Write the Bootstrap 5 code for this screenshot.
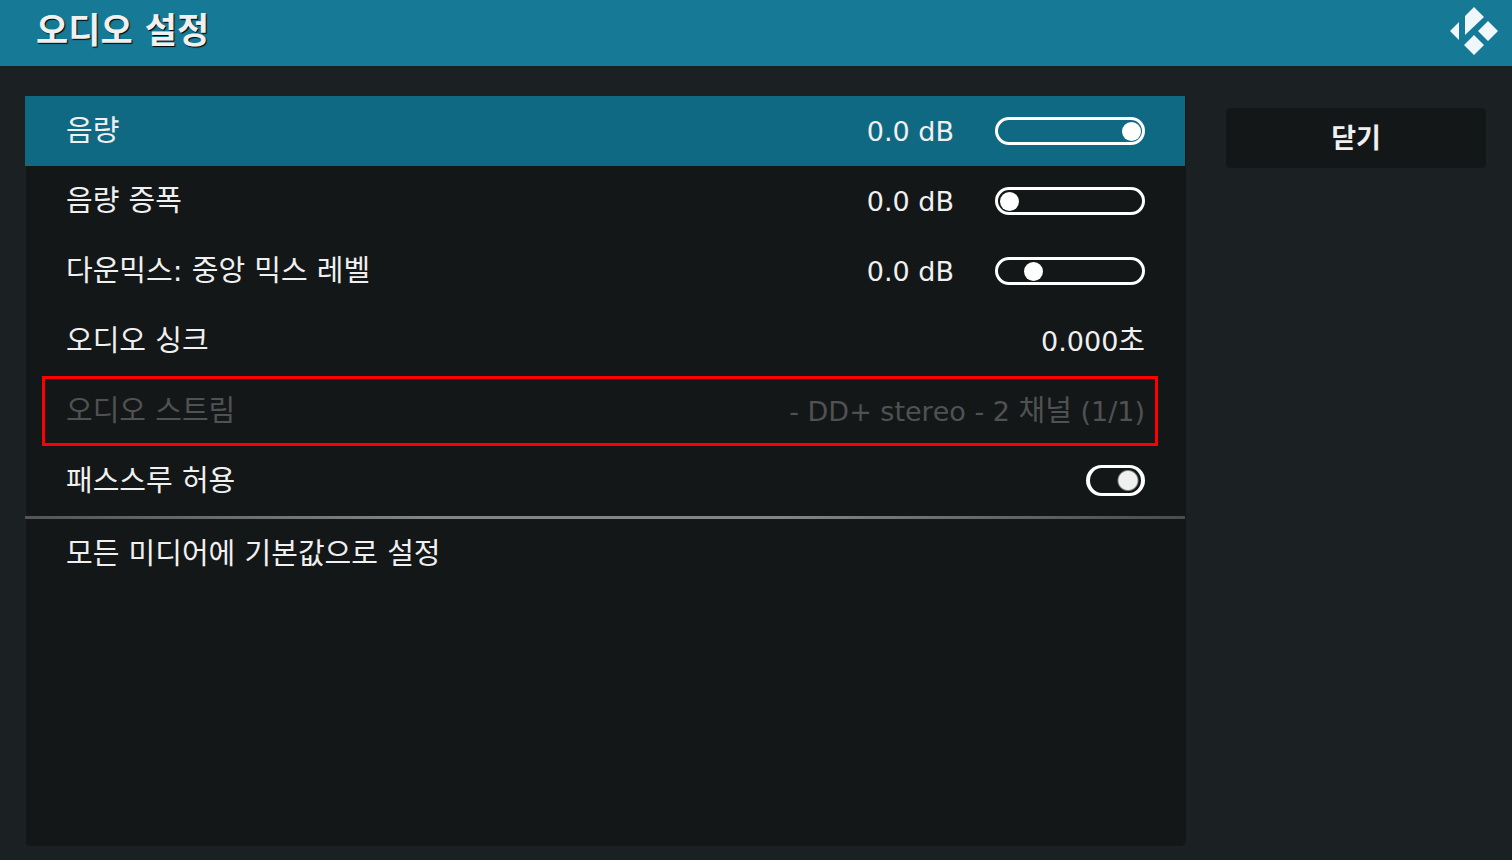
<!DOCTYPE html>
<html lang="ko">
<head>
<meta charset="utf-8">
<meta name="viewport" content="width=device-width, initial-scale=1">
<title>오디오 설정</title>
<link href="https://cdn.jsdelivr.net/npm/bootstrap@5.3.0/dist/css/bootstrap.min.css" rel="stylesheet">
<style>
  body {
    background: #1b2123;
    color: #f0f0f0;
    font-family: "DejaVu Sans", "Noto Sans CJK KR", sans-serif;
    font-size: 29px;
    line-height: 40px;
    font-kerning: none;
  }
  .topbar { background: #167a97; height: 66px; padding: 0 14px 4px 36px; }
  .topbar h1 { font-size: 35px; line-height: 48px; font-weight: 700; text-shadow: 1px 1px 1px #000; }
  .kodi-logo { width: 48px; height: 48px; }
  .dialog { padding: 30px 26px 14px 25px; gap: 40px; }
  .panel {
    background: linear-gradient(#141718, #141718) right / calc(100% - 1px) 100% no-repeat;
    border-radius: 0 0 5px 5px; padding-right: 1px; min-width: 0;
  }
  .setting { height: 70px; padding: 0 40px 0 41px; }
  .setting.selected { background: #106983; }
  .setting.is-disabled { color: #505152; position: relative; }
  .setting.is-disabled::after {
    content: ""; position: absolute; inset: 0 27px 0 17px; border: 3px solid #f00; pointer-events: none;
  }
  .amount { font-size: 27px; }
  .amount span { font-size: 29px; }
  .with-slider { gap: 41px; }
  .with-slider .amount { padding-top: 2px; }
  .divider { height: 3px; background: linear-gradient(90deg, #555, #858585 35%, #858585 65%, #4c4c4c); }
  .level {
    -webkit-appearance: none; appearance: none;
    width: 150px; height: 28px; padding: 0 1px 0 2px;
    border: 3px solid #fff; border-radius: 14px; background: transparent;
  }
  .level::-webkit-slider-thumb {
    -webkit-appearance: none; width: 19px; height: 19px; border-radius: 50%; background: #fff;
  }
  .toggle.form-check-input {
    width: 59px; height: 31px; margin: 0 0 1px; border: 3px solid #fff; border-left-width: 4px; border-right-width: 4px; border-radius: 16px;
    background: radial-gradient(circle at 38px 50%, #f0f0f0 0 9px, transparent 11px);
  }
  .action { color: inherit; background: transparent; border: 0; text-align: left; }
  .close-btn {
    width: 260px; height: 60px; padding: 2px 0 0; border: 0; border-radius: 4px;
    background: #141718; color: #f0f0f0; font-size: 27px; line-height: 40px; font-weight: 700;
  }
  .close-btn:hover { background: #106983; color: #fff; }
</style>
</head>
<body class="min-vh-100 d-flex flex-column">
<header class="topbar d-flex align-items-center justify-content-between">
  <h1 class="m-0">오디오 설정</h1>
  <svg class="kodi-logo flex-shrink-0" viewBox="0 0 48 48" fill="#f0f7fa" role="img" aria-label="Kodi">
    <path d="M0 24 9 15V33ZM15 28V9L24 0 34 10ZM24 28 34 38 24 48 14 38ZM38 14 48 24 38 34 28 24Z"/>
  </svg>
</header>
<main class="dialog d-flex flex-grow-1 align-items-stretch">
  <section class="panel flex-grow-1">
    <div class="setting selected d-flex align-items-center justify-content-between">
      <label for="volume">음량</label>
      <div class="with-slider d-flex align-items-center">
        <output class="amount" for="volume">0.0 dB</output>
        <input class="level" id="volume" type="range" min="0" max="100" value="100">
      </div>
    </div>
    <div class="setting d-flex align-items-center justify-content-between">
      <label for="amplify">음량 증폭</label>
      <div class="with-slider d-flex align-items-center">
        <output class="amount" for="amplify">0.0 dB</output>
        <input class="level" id="amplify" type="range" min="0" max="100" value="0">
      </div>
    </div>
    <div class="setting d-flex align-items-center justify-content-between">
      <label for="center-mix">다운믹스: 중앙 믹스 레벨</label>
      <div class="with-slider d-flex align-items-center">
        <output class="amount" for="center-mix">0.0 dB</output>
        <input class="level" id="center-mix" type="range" min="0" max="100" value="20">
      </div>
    </div>
    <div class="setting d-flex align-items-center justify-content-between">
      <div>오디오 싱크</div>
      <div class="amount">0.000<span>초</span></div>
    </div>
    <div class="setting is-disabled d-flex align-items-center justify-content-between" aria-disabled="true">
      <div>오디오 스트림</div>
      <div class="amount">- DD+ stereo - 2 <span>채널</span> (1/1)</div>
    </div>
    <div class="setting d-flex align-items-center justify-content-between">
      <label for="passthrough">패스스루 허용</label>
      <input class="toggle form-check-input" id="passthrough" type="checkbox" role="switch" checked>
    </div>
    <div class="divider"></div>
    <button class="setting action w-100 d-flex align-items-center" type="button">모든 미디어에 기본값으로 설정</button>
  </section>
  <aside class="flex-shrink-0 pt-2 mt-1">
    <button class="close-btn btn d-block" type="button">닫기</button>
  </aside>
</main>
<script src="https://cdn.jsdelivr.net/npm/bootstrap@5.3.0/dist/js/bootstrap.bundle.min.js"></script>
</body>
</html>
